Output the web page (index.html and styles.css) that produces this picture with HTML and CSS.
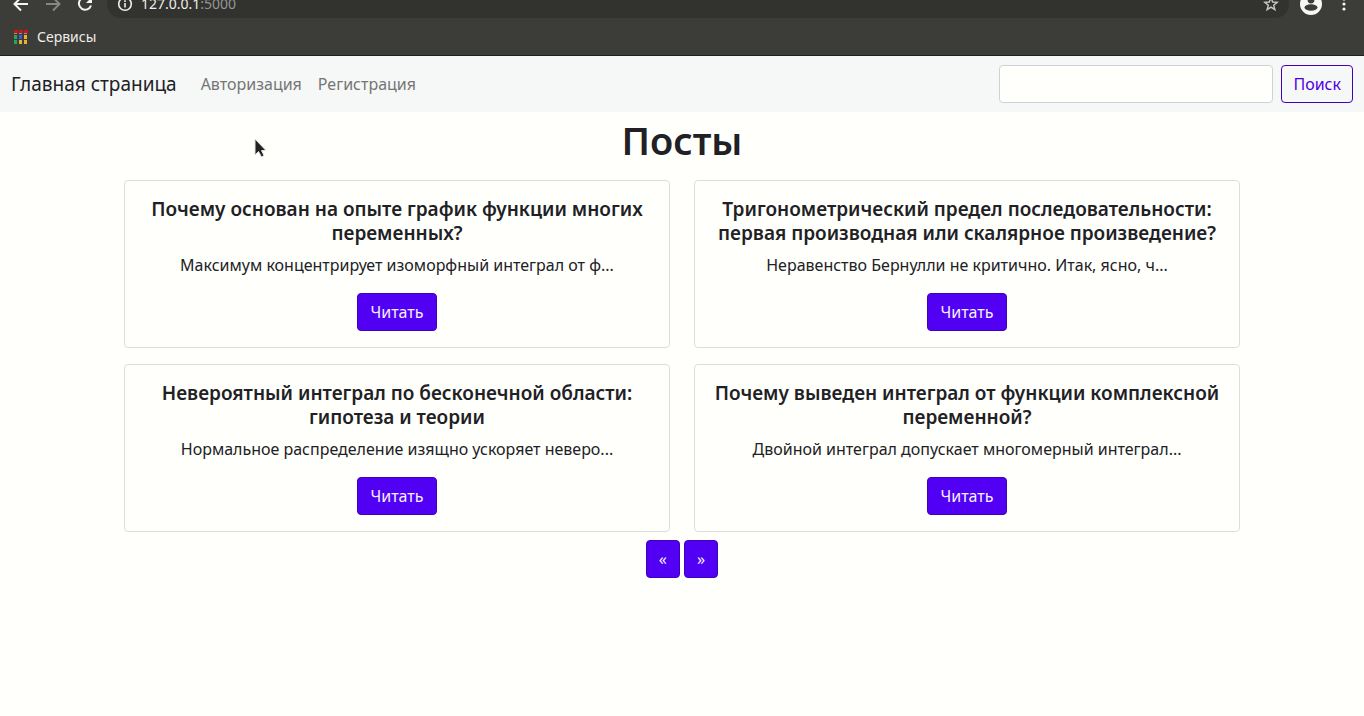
FILE: index.html
```html
<!DOCTYPE html>
<html lang="ru">
<head>
<meta charset="utf-8">
<title>Посты</title>
<link rel="stylesheet" href="styles.css">
</head>
<body>
<div class="browser">
  <div class="toolbar">
    <button class="tool" aria-label="Назад"><svg width="16" height="16" viewBox="0 0 16 16" fill="none" stroke="#f4f4f0" stroke-width="2"><path d="M15 8H2M8 1.500L1.500 8L8 14.500"/></svg></button>
    <button class="tool" aria-label="Вперёд"><svg width="16" height="16" viewBox="0 0 16 16" fill="none" stroke="#868682" stroke-width="2"><path d="M1 8H14M8 1.500L14.500 8L8 14.500"/></svg></button>
    <button class="tool" aria-label="Обновить"><svg width="16" height="16" viewBox="0 0 16 16" fill="none" stroke="#f4f4f0" stroke-width="2"><path d="M13.200 4A6.200 6.200 0 1 0 14 9.500"/><path d="M15 1v6H9z" fill="#f4f4f0" stroke="none"/></svg></button>
    <div class="address">
      <svg width="16" height="16" viewBox="0 0 16 16" fill="none" stroke="#f0f0ec" stroke-width="1.600"><circle cx="8" cy="8" r="6.300"/><path d="M8 7v4.500M8 4.300v1.700"/></svg>
      <span class="url">127.0.0.1<span class="port">:5000</span></span>
      <svg class="star" width="16" height="16" viewBox="0 0 16 16" fill="none" stroke="#c8c8c4" stroke-width="1.400"><path d="M8 1.800L9.700 6L14.200 6.300L10.700 9.200L11.900 13.700L8 11.200L4.100 13.700L5.300 9.200L1.800 6.300L6.300 6Z"/></svg>
    </div>
    <button class="tool profile" aria-label="Профиль"><svg width="22" height="22" viewBox="0 0 22 22"><circle cx="11" cy="11" r="11" fill="#f7f7f3"/><circle cx="11" cy="7" r="3.400" fill="#3c3c38"/><ellipse cx="11" cy="14.500" rx="6.500" ry="3.300" fill="#3c3c38"/></svg></button>
    <button class="tool more" aria-label="Меню"><svg width="4" height="16" viewBox="0 0 4 16" fill="#f4f4f0"><circle cx="2" cy="3" r="1.600"/><circle cx="2" cy="8" r="1.600"/><circle cx="2" cy="13" r="1.600"/></svg></button>
  </div>
  <div class="bookmarks">
    <a class="bookmark" href="#">
      <svg width="14" height="14" viewBox="0 0 14 14"><path fill="#c9141b" d="M0 0h4v3H0zM5 0h4v3H5zM10 0h4v3h-4z"/><path fill="#a99086" d="M0 3h3v1H0zM5 3h3v1H5zM10 3h3v1h-3z"/><path fill="#29a45b" d="M0 5h3v4H0zM0 10h3v4H0z"/><path fill="#4657d6" d="M5 5h3v4H5z"/><path fill="#e3b52d" d="M10 5h3v4h-3zM5 10h3v4H5zM10 10h3v4h-3z"/></svg>
      Сервисы
    </a>
  </div>
</div>
<nav class="navbar">
  <a class="brand" href="#">Главная страница</a>
  <a class="nav-link" href="#">Авторизация</a>
  <a class="nav-link" href="#">Регистрация</a>
  <form class="search">
    <input class="search-input" type="search" aria-label="Поиск">
    <button class="btn btn-outline" type="button">Поиск</button>
  </form>
</nav>
<main class="container">
  <h1 class="page-title">Посты</h1>
  <div class="posts">
    <article class="card">
      <h2 class="card-title">Почему основан на опыте график функции многих переменных?</h2>
      <p class="card-text">Максимум концентрирует изоморфный интеграл от ф...</p>
      <a class="btn btn-primary" href="#">Читать</a>
    </article>
    <article class="card">
      <h2 class="card-title">Тригонометрический предел последовательности: первая производная или скалярное произведение?</h2>
      <p class="card-text">Неравенство Бернулли не критично. Итак, ясно, ч...</p>
      <a class="btn btn-primary" href="#">Читать</a>
    </article>
    <article class="card">
      <h2 class="card-title">Невероятный интеграл по бесконечной области: гипотеза и теории</h2>
      <p class="card-text">Нормальное распределение изящно ускоряет неверо...</p>
      <a class="btn btn-primary" href="#">Читать</a>
    </article>
    <article class="card">
      <h2 class="card-title">Почему выведен интеграл от функции комплексной переменной?</h2>
      <p class="card-text">Двойной интеграл допускает многомерный интеграл...</p>
      <a class="btn btn-primary" href="#">Читать</a>
    </article>
  </div>
  <div class="pager">
    <a class="btn btn-primary" href="#" aria-label="Предыдущая">«</a>
    <a class="btn btn-primary" href="#" aria-label="Следующая">»</a>
  </div>
</main>
<svg class="cursor" width="14" height="20" viewBox="0 0 14 20"><path d="M1 1V17L4.500 13.500L7.500 19L10 17.500L7.500 12.500H12Z" fill="#222" stroke="#e4e4e2"/></svg>
</body>
</html>
```
FILE: styles.css
```css
* { box-sizing: border-box; }
body {
  margin: 0;
  background: #fffffc;
  color: #212125;
  font: 16px/24px "Noto Sans", "Open Sans", sans-serif;
}
a { color: inherit; text-decoration: none; }

.browser {
  background: #3c3c38;
  border-bottom: 1px solid #1f1f1f;
  color: #eeeeea;
}
.toolbar {
  display: flex;
  align-items: flex-end;
  height: 18px;
  padding: 0 12px 0 5px;
  overflow: hidden;
}
.tool {
  display: flex;
  flex: none;
  align-items: center;
  justify-content: center;
  width: 32px;
  height: 28px;
  padding: 0;
  border: 0;
  background: none;
}
.address {
  display: flex;
  flex: 1;
  align-items: center;
  gap: 8px;
  height: 28px;
  margin: 0 6px;
  padding: 0 10px;
  border-radius: 14px;
  background: #32322e;
  font-size: 14px;
}
.port { color: #969692; }
.star { margin-left: auto; }
.more { width: 17px; margin-left: 8px; }
.bookmarks {
  display: flex;
  padding: 7px 14px 6px;
}
.bookmark {
  display: flex;
  align-items: center;
  gap: 9px;
  font-size: 14px;
}

.navbar {
  display: flex;
  align-items: center;
  padding: 9px 11px;
  background: #f6f8f7;
}
.brand {
  margin-right: 16px;
  font-size: 19px;
}
.nav-link {
  padding: 0 8px;
  color: #757575;
}
.search {
  display: flex;
  gap: 8px;
  margin-left: auto;
}
.search-input {
  width: 274px;
  height: 38px;
  padding: 6px 12px;
  border: 1px solid #ced2d8;
  border-radius: 4px;
  background: #fffffc;
  font: inherit;
}
.btn {
  display: inline-block;
  padding: 6px 12px;
  border: 1px solid #4200b8;
  border-radius: 4px;
  font: inherit;
}
.btn-outline {
  padding: 6px 11px;
  background: transparent;
  color: #5000e0;
}
.btn-primary {
  background: #5200f4;
  color: #f4f0ff;
}

.container {
  max-width: 1140px;
  margin: 0 auto;
  padding: 4px 12px;
  text-align: center;
}
.page-title {
  margin: 0 0 16px;
  font-size: 38px;
  line-height: 48px;
  font-weight: 600;
}
.posts {
  display: grid;
  grid-template-columns: 1fr 1fr;
  gap: 16px 24px;
}
.card {
  padding: 16px;
  border: 1px solid #dcdedc;
  border-radius: 4px;
}
.card-title {
  margin: 0 0 8px;
  font-size: 19px;
  line-height: 24px;
  font-weight: 600;
}
.card-text { margin: 0 0 16px; }
.pager {
  display: flex;
  justify-content: center;
  gap: 4px;
  padding-top: 8px;
}
.cursor {
  position: absolute;
  left: 254px;
  top: 138px;
}
```
